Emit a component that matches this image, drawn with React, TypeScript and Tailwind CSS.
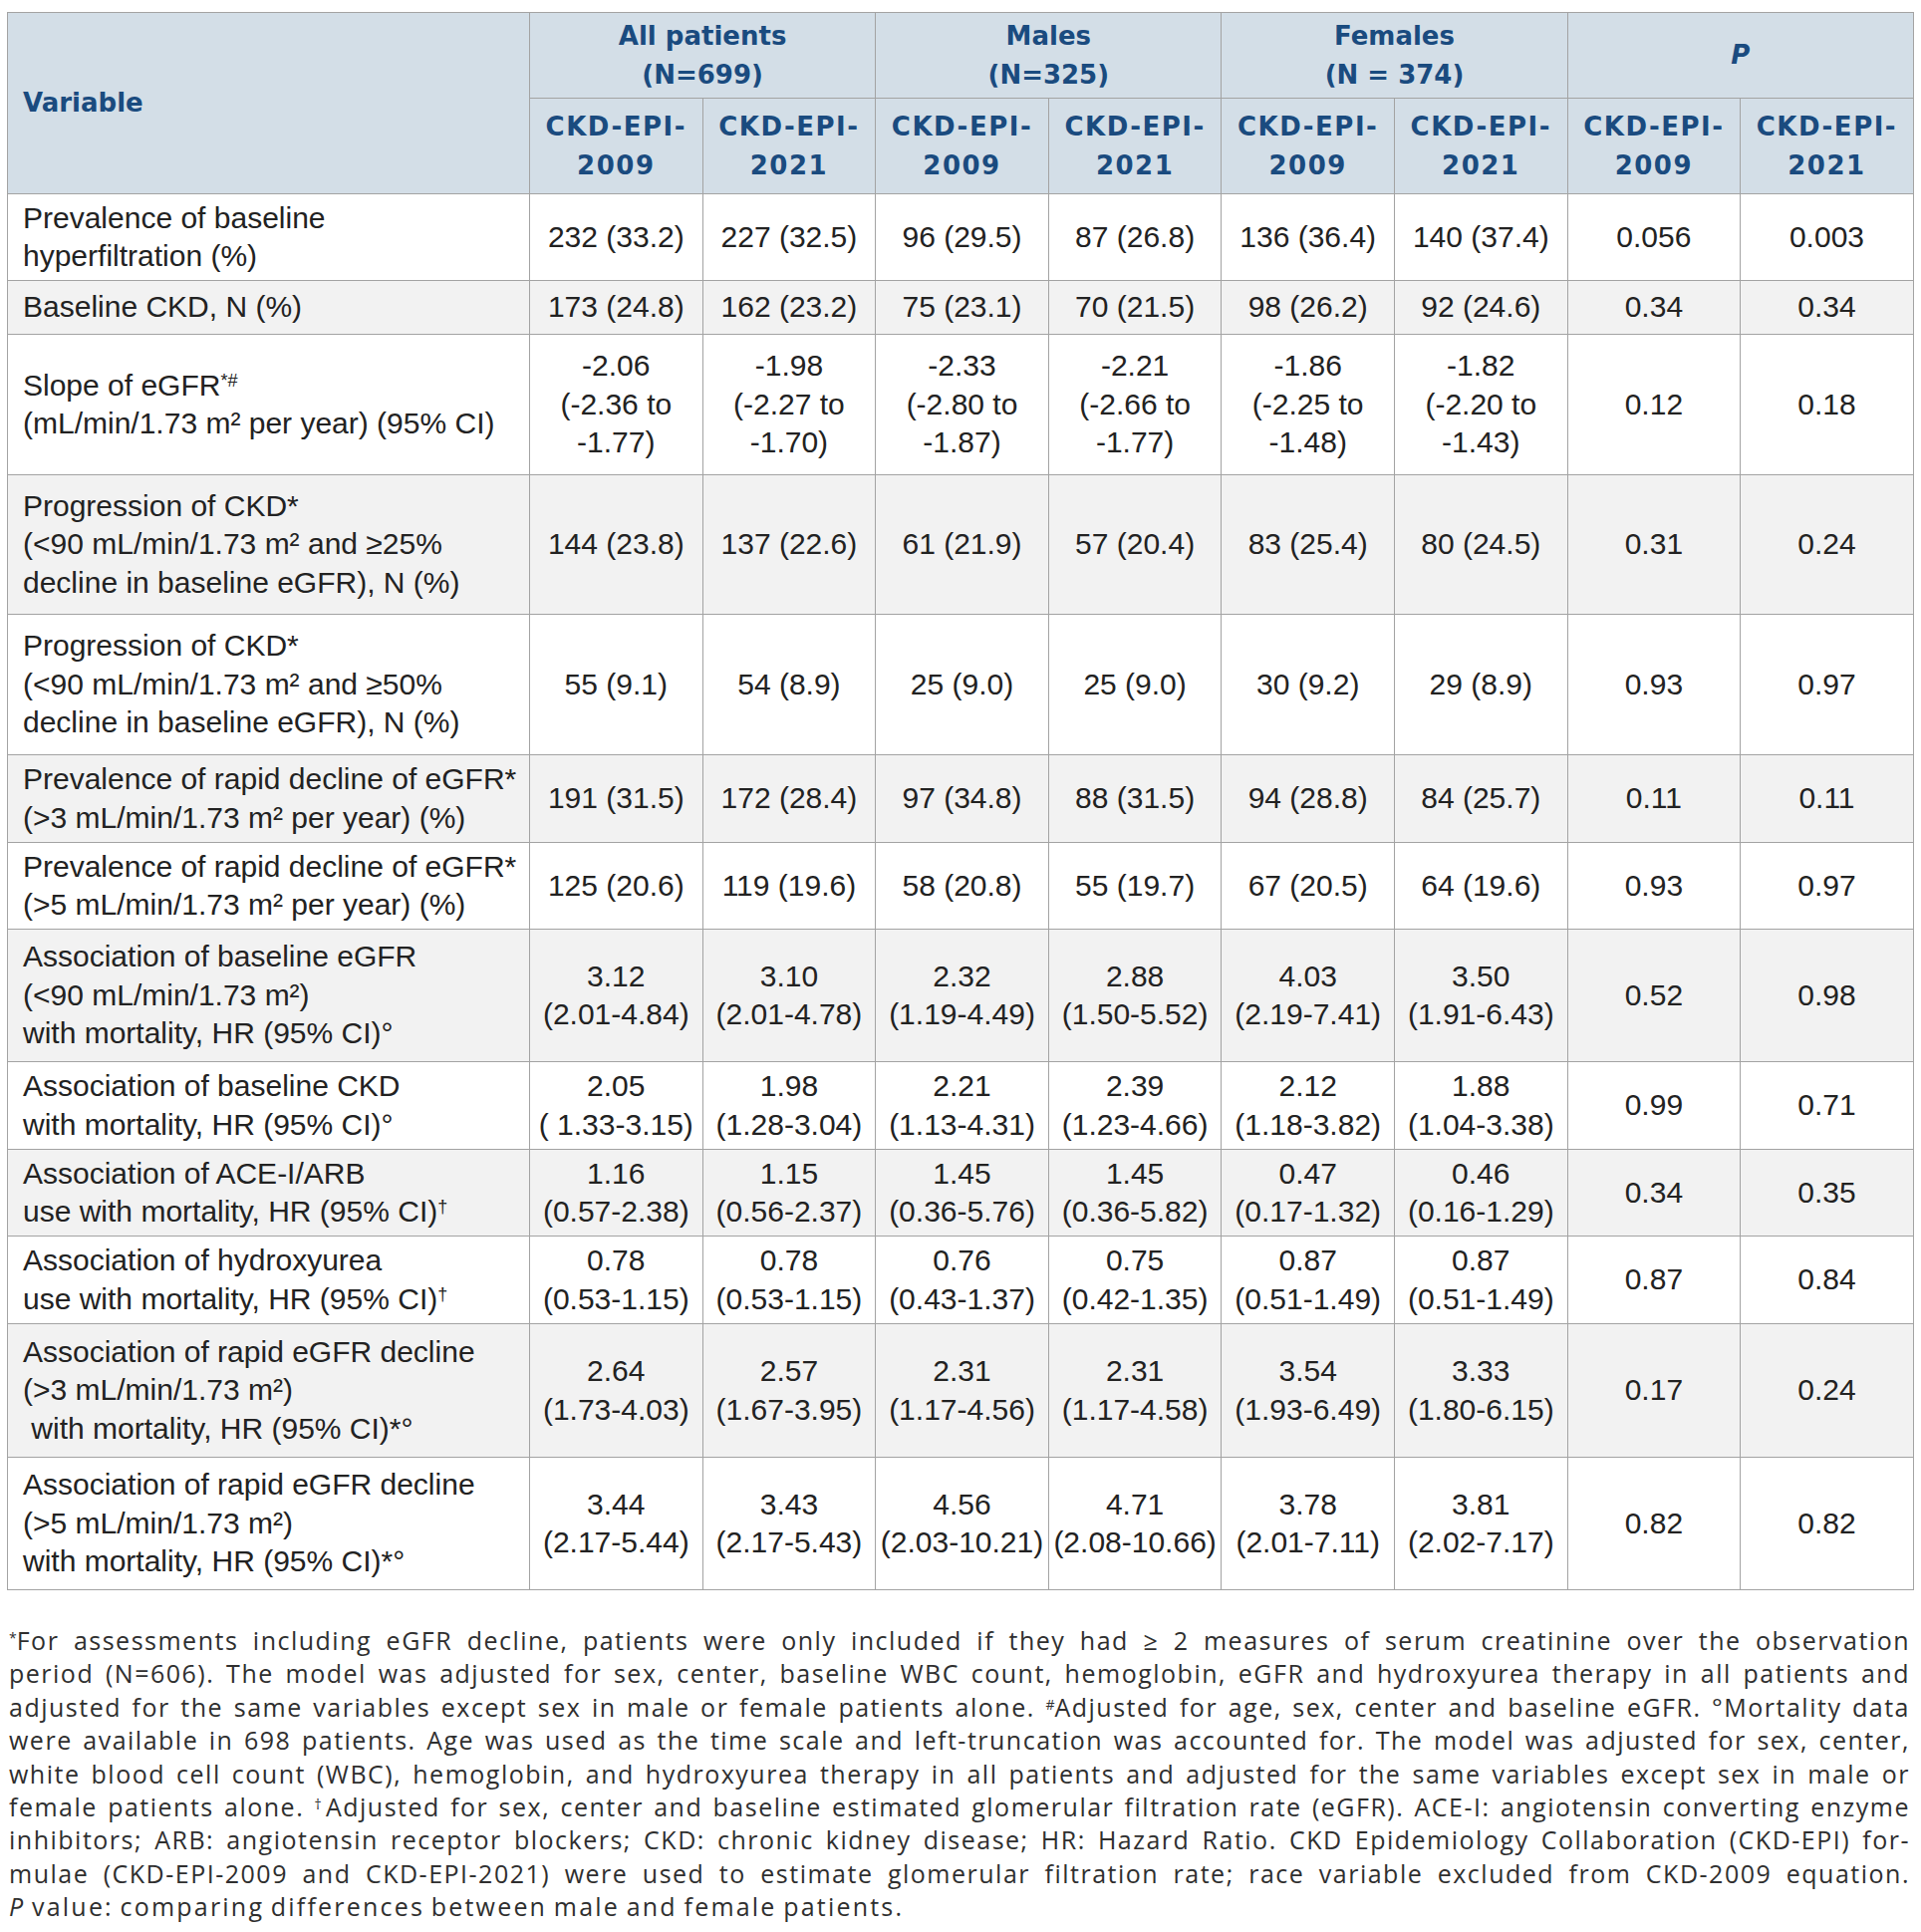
import type { ReactNode } from 'react'

type Row = {
  label: ReactNode
  cells: string[][]
  p: [string, string]
  h: string
}

const m2 = <>m²</>

const rows: Row[] = [
  {
    label: <>Prevalence of baseline<br />hyperfiltration (%)</>,
    cells: [['232 (33.2)'], ['227 (32.5)'], ['96 (29.5)'], ['87 (26.8)'], ['136 (36.4)'], ['140 (37.4)']],
    p: ['0.056', '0.003'],
    h: 'h-[87px]',
  },
  {
    label: <>Baseline CKD, N (%)</>,
    cells: [['173 (24.8)'], ['162 (23.2)'], ['75 (23.1)'], ['70 (21.5)'], ['98 (26.2)'], ['92 (24.6)']],
    p: ['0.34', '0.34'],
    h: 'h-[54px]',
  },
  {
    label: (
      <>
        Slope of eGFR<sup className="text-[18px]">*#</sup>
        <br />(mL/min/1.73 {m2} per year) (95% CI)
      </>
    ),
    cells: [
      ['-2.06', '(-2.36 to', '-1.77)'],
      ['-1.98', '(-2.27 to', '-1.70)'],
      ['-2.33', '(-2.80 to', '-1.87)'],
      ['-2.21', '(-2.66 to', '-1.77)'],
      ['-1.86', '(-2.25 to', '-1.48)'],
      ['-1.82', '(-2.20 to', '-1.43)'],
    ],
    p: ['0.12', '0.18'],
    h: 'h-[141px]',
  },
  {
    label: (
      <>
        Progression of CKD*
        <br />(&lt;90 mL/min/1.73 {m2} and ≥25%
        <br />decline in baseline eGFR), N (%)
      </>
    ),
    cells: [['144 (23.8)'], ['137 (22.6)'], ['61 (21.9)'], ['57 (20.4)'], ['83 (25.4)'], ['80 (24.5)']],
    p: ['0.31', '0.24'],
    h: 'h-[140px]',
  },
  {
    label: (
      <>
        Progression of CKD*
        <br />(&lt;90 mL/min/1.73 {m2} and ≥50%
        <br />decline in baseline eGFR), N (%)
      </>
    ),
    cells: [['55 (9.1)'], ['54 (8.9)'], ['25 (9.0)'], ['25 (9.0)'], ['30 (9.2)'], ['29 (8.9)']],
    p: ['0.93', '0.97'],
    h: 'h-[141px]',
  },
  {
    label: (
      <>
        Prevalence of rapid decline of eGFR*
        <br />(&gt;3 mL/min/1.73 {m2} per year) (%)
      </>
    ),
    cells: [['191 (31.5)'], ['172 (28.4)'], ['97 (34.8)'], ['88 (31.5)'], ['94 (28.8)'], ['84 (25.7)']],
    p: ['0.11', '0.11'],
    h: 'h-[88px]',
  },
  {
    label: (
      <>
        Prevalence of rapid decline of eGFR*
        <br />(&gt;5 mL/min/1.73 {m2} per year) (%)
      </>
    ),
    cells: [['125 (20.6)'], ['119 (19.6)'], ['58 (20.8)'], ['55 (19.7)'], ['67 (20.5)'], ['64 (19.6)']],
    p: ['0.93', '0.97'],
    h: 'h-[87px]',
  },
  {
    label: (
      <>
        Association of baseline eGFR
        <br />(&lt;90 mL/min/1.73 {m2})
        <br />with mortality, HR (95% CI)°
      </>
    ),
    cells: [
      ['3.12', '(2.01-4.84)'],
      ['3.10', '(2.01-4.78)'],
      ['2.32', '(1.19-4.49)'],
      ['2.88', '(1.50-5.52)'],
      ['4.03', '(2.19-7.41)'],
      ['3.50', '(1.91-6.43)'],
    ],
    p: ['0.52', '0.98'],
    h: 'h-[133px]',
  },
  {
    label: (
      <>
        Association of baseline CKD
        <br />with mortality, HR (95% CI)°
      </>
    ),
    cells: [
      ['2.05', '( 1.33-3.15)'],
      ['1.98', '(1.28-3.04)'],
      ['2.21', '(1.13-4.31)'],
      ['2.39', '(1.23-4.66)'],
      ['2.12', '(1.18-3.82)'],
      ['1.88', '(1.04-3.38)'],
    ],
    p: ['0.99', '0.71'],
    h: 'h-[88px]',
  },
  {
    label: (
      <>
        Association of ACE-I/ARB
        <br />use with mortality, HR (95% CI)<sup className="text-[18px]">†</sup>
      </>
    ),
    cells: [
      ['1.16', '(0.57-2.38)'],
      ['1.15', '(0.56-2.37)'],
      ['1.45', '(0.36-5.76)'],
      ['1.45', '(0.36-5.82)'],
      ['0.47', '(0.17-1.32)'],
      ['0.46', '(0.16-1.29)'],
    ],
    p: ['0.34', '0.35'],
    h: 'h-[87px]',
  },
  {
    label: (
      <>
        Association of hydroxyurea
        <br />use with mortality, HR (95% CI)<sup className="text-[18px]">†</sup>
      </>
    ),
    cells: [
      ['0.78', '(0.53-1.15)'],
      ['0.78', '(0.53-1.15)'],
      ['0.76', '(0.43-1.37)'],
      ['0.75', '(0.42-1.35)'],
      ['0.87', '(0.51-1.49)'],
      ['0.87', '(0.51-1.49)'],
    ],
    p: ['0.87', '0.84'],
    h: 'h-[88px]',
  },
  {
    label: (
      <>
        Association of rapid eGFR decline
        <br />(&gt;3 mL/min/1.73 {m2})
        <br />&nbsp;with mortality, HR (95% CI)*°
      </>
    ),
    cells: [
      ['2.64', '(1.73-4.03)'],
      ['2.57', '(1.67-3.95)'],
      ['2.31', '(1.17-4.56)'],
      ['2.31', '(1.17-4.58)'],
      ['3.54', '(1.93-6.49)'],
      ['3.33', '(1.80-6.15)'],
    ],
    p: ['0.17', '0.24'],
    h: 'h-[134px]',
  },
  {
    label: (
      <>
        Association of rapid eGFR decline
        <br />(&gt;5 mL/min/1.73 {m2})
        <br />with mortality, HR (95% CI)*°
      </>
    ),
    cells: [
      ['3.44', '(2.17-5.44)'],
      ['3.43', '(2.17-5.43)'],
      ['4.56', '(2.03-10.21)'],
      ['4.71', '(2.08-10.66)'],
      ['3.78', '(2.01-7.11)'],
      ['3.81', '(2.02-7.17)'],
    ],
    p: ['0.82', '0.82'],
    h: 'h-[133px]',
  },
]

const groups: ReactNode[] = [
  <>All patients<br />(N=699)</>,
  <>Males<br />(N=325)</>,
  <>Females<br />(N = 374)</>,
  <span className="italic">P</span>,
]

const sup = 'text-[14px] tracking-normal'

const notes: ReactNode[] = [
  <><sup className={sup}>*</sup>For assessments including eGFR decline, patients were only included if they had ≥ 2 measures of serum creatinine over the observation</>,
  <>period (N=606). The model was adjusted for sex, center, baseline WBC count, hemoglobin, eGFR and hydroxyurea therapy in all patients and</>,
  <>adjusted for the same variables except sex in male or female patients alone. <sup className={sup}>#</sup>Adjusted for age, sex, center and baseline eGFR. °Mortality data</>,
  <>were available in 698 patients. Age was used as the time scale and left-truncation was accounted for. The model was adjusted for sex, center,</>,
  <>white blood cell count (WBC), hemoglobin, and hydroxyurea therapy in all patients and adjusted for the same variables except sex in male or</>,
  <>female patients alone. <sup className={sup}>†</sup>Adjusted for sex, center and baseline estimated glomerular filtration rate (eGFR). ACE-I: angiotensin converting enzyme</>,
  <>inhibitors; ARB: angiotensin receptor blockers; CKD: chronic kidney disease; HR: Hazard Ratio. CKD Epidemiology Collaboration (CKD-EPI) for-</>,
  <>mulae (CKD-EPI-2009 and CKD-EPI-2021) were used to estimate glomerular filtration rate; race variable excluded from CKD-2009 equation.</>,
]

const head = "font-['DejaVu_Sans',sans-serif] font-bold text-[26px] leading-[38.5px] text-[#1a4b7f] bg-[#d3dee7] border border-[#a3a3a3]"
const cell = 'border border-[#a3a3a3] text-center align-middle px-0'

export default function App() {
  return (
    <div className="min-h-[1939px] bg-white pl-[7px] pr-[8px] pt-[12px]">
      <table className="w-[1913px] table-fixed border-collapse font-['Liberation_Sans',Arial,sans-serif] text-[30px] leading-[38.5px] text-[#222222]">
        <colgroup>
          <col className="w-[524px]" />
          {Array.from({ length: 8 }).map((_, i) => (
            <col key={i} className="w-[173.6px]" />
          ))}
        </colgroup>
        <thead>
          <tr>
            <th rowSpan={2} className={`${head} h-[86px] text-left align-middle pl-[15px]`}>
              Variable
            </th>
            {groups.map((g, i) => (
              <th key={i} colSpan={2} className={`${head} h-[86px] text-center align-middle`}>
                {g}
              </th>
            ))}
          </tr>
          <tr>
            {Array.from({ length: 8 }).map((_, i) => (
              <th key={i} className={`${head} h-[96px] text-center align-middle tracking-[1.5px]`}>
                CKD-EPI-
                <br />
                {i % 2 === 0 ? '2009' : '2021'}
              </th>
            ))}
          </tr>
        </thead>
        <tbody>
          {rows.map((r, i) => (
            <tr key={i} className={i % 2 === 1 ? 'bg-[#f2f2f2]' : 'bg-white'}>
              <td className={`border border-[#a3a3a3] align-middle pl-[15px] pr-0 whitespace-nowrap ${r.h}`}>{r.label}</td>
              {r.cells.map((c, j) => (
                <td key={j} className={`${cell} whitespace-nowrap`}>
                  {c.map((line, k) => (
                    <div key={k} className="whitespace-pre">{line}</div>
                  ))}
                </td>
              ))}
              <td className={cell}>{r.p[0]}</td>
              <td className={cell}>{r.p[1]}</td>
            </tr>
          ))}
        </tbody>
      </table>

      <div className="mt-[34px] w-[1910px] pl-[2px] font-['Open_Sans',sans-serif] text-[25px] leading-[33.4px] tracking-[1.5px] [word-spacing:-2px] text-[#2f2f2f]">
        {notes.map((n, i) => (
          <div key={i} className="whitespace-nowrap text-justify [text-align-last:justify]">
            {n}
          </div>
        ))}
        <div className="tracking-[2.2px]">
          <span className="italic">P</span> value: comparing differences between male and female patients.
        </div>
      </div>
    </div>
  )
}
